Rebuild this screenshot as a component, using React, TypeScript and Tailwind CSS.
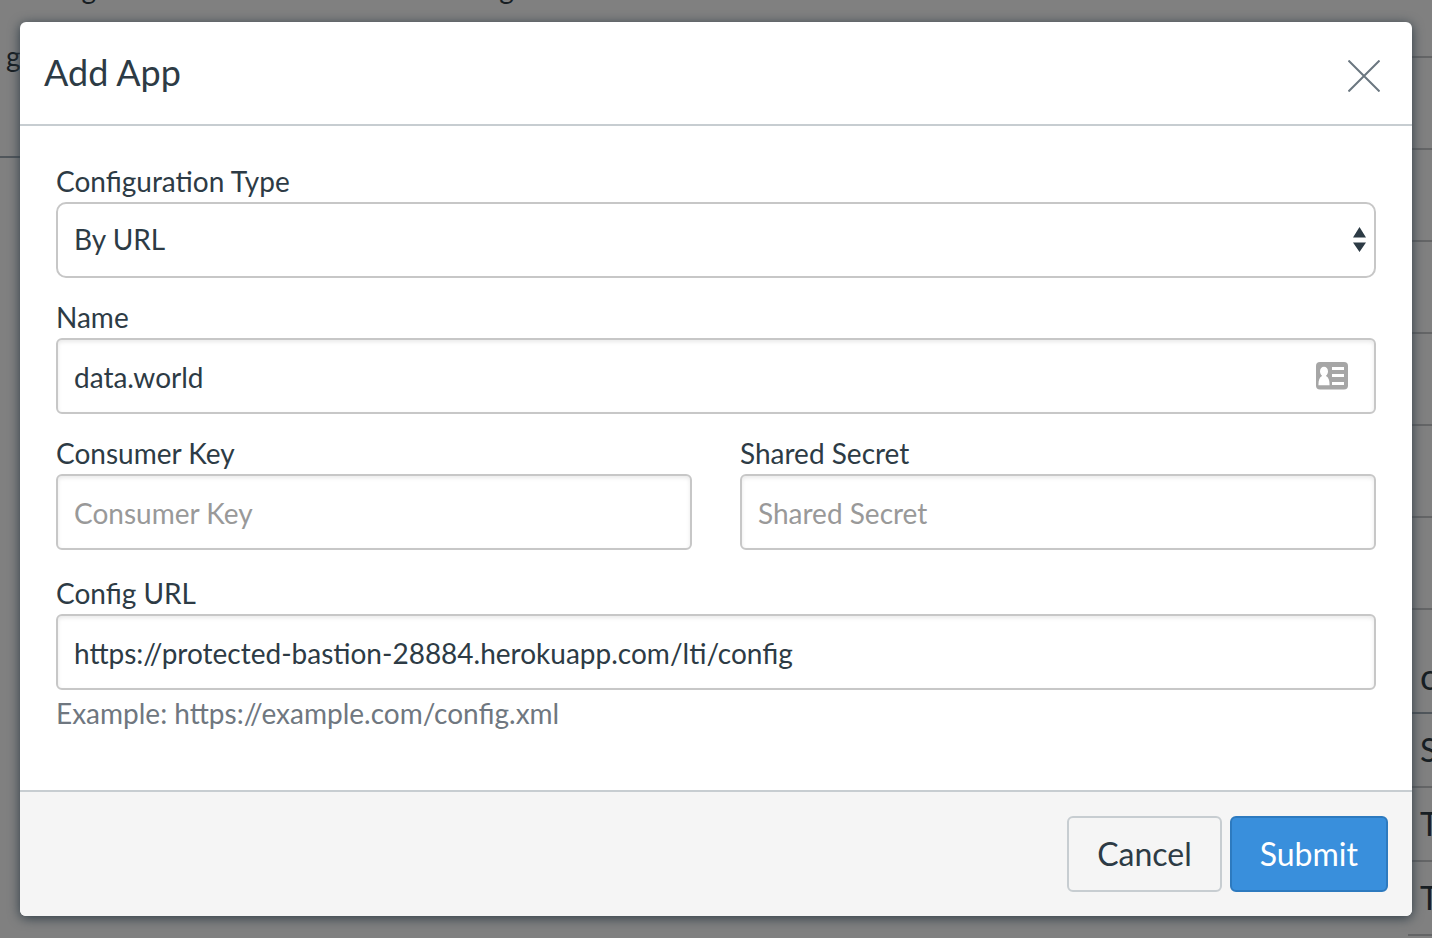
import { ReactNode } from "react";

const inputClass =
  "block h-[76px] w-full rounded-md border-2 border-[#c7c7c7] bg-white px-4 pt-0.5 text-[28px] leading-10 text-[#2d3b45] shadow-[inset_0_2px_4px_rgba(0,0,0,0.09)] outline-none placeholder:text-[#999999] placeholder:opacity-100";

function Field({ id, label, children }: { id: string; label: string; children: ReactNode }) {
  return (
    <div className="min-w-0 flex-1">
      <label htmlFor={id} className="block pb-0.5 text-[28px] leading-[38px]">
        {label}
      </label>
      {children}
    </div>
  );
}

function ContactCardIcon() {
  return (
    <svg width="32" height="28" viewBox="0 0 32 28" aria-hidden="true">
      <rect width="32" height="27.5" rx="4" fill="#a6a6a6" />
      <ellipse cx="8" cy="9.500" rx="4" ry="4.800" fill="#fff" />
      <path d="M6 12h4v3H6z" fill="#fff" />
      <path d="M2.400 23.300c0-5 1-8 3.600-9.300h4c2.600 1.300 3.600 4.300 3.600 9.300z" fill="#fff" />
      <path d="M16 6.500h12M16 13.500h12M16 21.500h12" stroke="#fff" strokeWidth="3" />
    </svg>
  );
}

const appRows = ["", "", "", "", "", "", ""];
const listRows = ["S", "T", "T"];

function PageBehind() {
  return (
    <div aria-hidden="true" className="absolute inset-0 flex justify-between overflow-hidden bg-[#808080] text-[#171e23]">
      <div className="min-w-0">
        <p className="-mt-8 -ml-14 whitespace-nowrap text-[28px] leading-10">
          them through course modules and create assignments for assessment tools.
        </p>
        <p className="ml-1.5 mt-7 text-[28px] leading-10">g</p>
        <div className="mt-20 w-10 border-t-2 border-[#50565b]" />
      </div>
      <div className="w-6 shrink-0">
        {appRows.map((_, i) => (
          <div key={i} className={i === 0 ? "h-[58px] border-b-2 border-[#646566]" : "h-[92px] border-b-2 border-[#646566]"} />
        ))}
        <div className="flex h-[104px] items-end border-b-2 border-[#50565b] pb-4 pl-3 text-[36px] leading-10">c</div>
        {listRows.map((text, i) => (
          <div key={i} className="flex h-[74px] items-center border-b-2 border-[#646566] pl-3 text-[32px] leading-10">
            {text}
          </div>
        ))}
      </div>
    </div>
  );
}

export default function App() {
  return (
    <main className="relative min-h-screen overflow-hidden px-5 py-[22px] font-['Lato',sans-serif] text-[#2d3b45]">
      <PageBehind />
      <section
        role="dialog"
        aria-labelledby="dialog-title"
        className="relative overflow-hidden rounded-md bg-white shadow-[0_2px_12px_#2d3b45]"
      >
        <header className="flex items-center justify-between border-b-2 border-[#c7cdd1] pt-[26px] pb-6 pr-8 pl-6">
          <h1 id="dialog-title" className="pb-1 text-[36px] leading-[48px]">
            Add App
          </h1>
          <button type="button" aria-label="Close" className="py-2">
            <svg width="32" height="32" viewBox="0 0 32 32" fill="none" stroke="#6b7780" strokeWidth="2" className="mt-1">
              <path d="M.5.5l31 31M31.500.5l-31 31" />
            </svg>
          </button>
        </header>
        <form onSubmit={(e) => e.preventDefault()}>
          <div className="flex flex-col gap-5 px-9 pt-9 pb-14">
            <Field id="config-type" label="Configuration Type">
              <div className="relative">
                <select
                  id="config-type"
                  defaultValue="url"
                  className="block h-[76px] w-full appearance-none rounded-[10px] border-2 border-[#c7c7c7] bg-white px-4 pb-0.5 text-[28px] leading-10 outline-none"
                >
                  <option value="url">By URL</option>
                  <option value="xml">Paste XML</option>
                </select>
                <svg
                  width="14"
                  height="26"
                  viewBox="0 0 14 26"
                  fill="#2d3b45"
                  className="pointer-events-none absolute top-6 right-[10px]"
                >
                  <path d="M7.500 1l6.500 10.500H1zM1 16.500h13L7.500 26z" />
                </svg>
              </div>
            </Field>
            <Field id="name" label="Name">
              <div className="relative">
                <input id="name" type="text" defaultValue="data.world" className={inputClass} />
                <span className="pointer-events-none absolute top-6 right-7">
                  <ContactCardIcon />
                </span>
              </div>
            </Field>
            <div className="flex gap-12">
              <Field id="key" label="Consumer Key">
                <input id="key" type="text" placeholder="Consumer Key" className={inputClass} />
              </Field>
              <Field id="secret" label="Shared Secret">
                <input id="secret" type="text" placeholder="Shared Secret" className={inputClass} />
              </Field>
            </div>
            <div className="pt-1">
              <Field id="config-url" label="Config URL">
                <input
                  id="config-url"
                  type="text"
                  defaultValue="https://protected-bastion-28884.herokuapp.com/lti/config"
                  className={inputClass}
                />
              </Field>
              <p className="pt-1 pb-0.5 text-[28px] leading-[38px] text-[#6f7780]">Example: https://example.com/config.xml</p>
            </div>
          </div>
          <footer className="flex justify-end gap-2 border-t-2 border-[#c7cdd1] bg-[#f5f5f5] p-6">
            <button type="button" className="h-[76px] rounded-md border-2 border-[#c7cdd1] bg-[#f5f5f5] px-7 text-[32px] leading-10">
              Cancel
            </button>
            <button type="submit" className="h-[76px] rounded-md border-2 border-[#2d7abf] bg-[#398fdc] px-7 text-[32px] leading-10 text-white">
              Submit
            </button>
          </footer>
        </form>
      </section>
    </main>
  );
}
